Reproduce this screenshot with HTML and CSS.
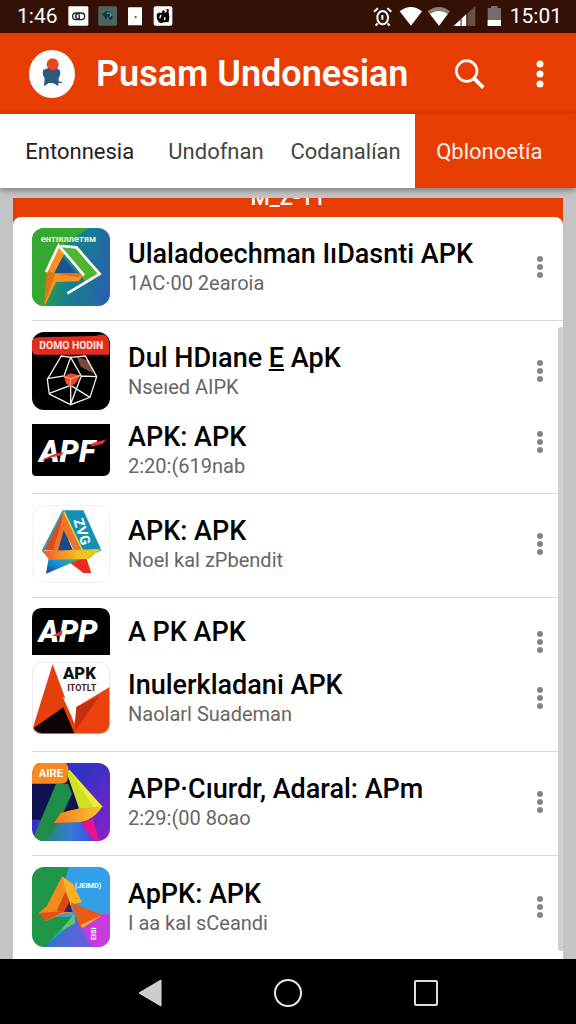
FILE: index.html
```html
<!DOCTYPE html>
<html lang="id">
<head>
<meta charset="UTF-8">
<meta name="viewport" content="width=device-width, initial-scale=1">
<title>Pusam Undonesian</title>
<link rel="stylesheet" href="styles.css">
</head>
<body>

<!-- status bar -->
<div class="status">
  <span class="clock">1:46</span>
  <svg class="s-icons" width="105" height="20" viewBox="0 0 315 60">
    <rect x="1" y="1" width="60" height="58" rx="4" fill="#fff"/>
    <rect x="14" y="21" width="36" height="20" rx="10" fill="none" stroke="#222" stroke-width="4"/>
    <path d="M24 25v12M33 23a8 8 0 1 0 1 15z" fill="none" stroke="#222" stroke-width="4"/>
    <rect x="91" y="1" width="56" height="58" rx="4" fill="#4d665c"/>
    <path d="M103 25q14-18 28-4l3 16-8 6-7-14-4 12z" fill="#17343c"/>
    <path d="M116 22q10-4 14 4l-5 6" fill="none" stroke="#3bb0ac" stroke-width="4"/>
    <rect x="180" y="4" width="42" height="54" rx="2" fill="#fff"/>
    <circle cx="203" cy="33" r="3" fill="#444"/>
    <rect x="257" y="1" width="56" height="58" rx="6" fill="#fff"/>
    <path d="M266 25q6-9 14-4l6-9 5 4-3 5 8-3V9h6v13q5 12 0 26l-14 1-9 3q-14-4-13-27z" fill="#080808"/>
    <path d="M279 27l-4 10M290 34v8" stroke="#fff" stroke-width="4"/>
  </svg>
  <svg class="s-right" width="129" height="22" viewBox="0 0 387 66">
    <g fill="none" stroke="#fff" stroke-width="6">
      <ellipse cx="29" cy="38" rx="16" ry="20"/>
      <path d="M3 20l12-10M43 10l12 10M14 55l-6 7M44 55l6 7M28 30v14"/>
    </g>
    <path d="M80 19q34-26 67 0l-33 43z" fill="#fff"/>
    <path d="M164 19q34-26 67 0l-33 43z" fill="#8b8078"/>
    <path d="M171 27q27-18 53 0l-26 35z" fill="#fff"/>
    <path d="M242 63l65-60v60z" fill="#6b5049"/>
    <path d="M242 63l38-36v36z" fill="#fff"/>
    <path d="M264 40v23M282 24v39" stroke="#351006" stroke-width="3"/>
    <path d="M344 9h10V3h20v6h10v54h-40z" fill="#766b68"/>
    <path d="M344 45h40v18h-40z" fill="#fff"/>
  </svg>
  <span class="clock">15:01</span>
</div>

<!-- app bar -->
<header class="appbar">
  <svg class="logo" width="46" height="48" viewBox="0 0 138 144">
    <ellipse cx="69" cy="72" rx="69" ry="72" fill="#fff"/>
    <path d="M43 60q10-8 26-2 14-6 23 2 5 13-3 24v10l10 2-1 4-9-2-2 10-13-8-15-1-14 10 2-25q-9-10-4-24z" fill="#2b5a7c"/>
    <circle cx="71" cy="43" r="18" fill="#e54a22"/>
    <path d="M57 54q14 12 28 0" fill="none" stroke="#a5474a" stroke-width="4"/>
  </svg>
  <h1>Pusam Undonesian</h1>
  <button class="ibtn" aria-label="Search">
    <svg width="30" height="30" viewBox="0 0 90 90" fill="none" stroke="#fff">
      <circle cx="35" cy="36" r="31" stroke-width="8"/>
      <path d="M57 58l28 28" stroke-width="11"/>
    </svg>
  </button>
  <button class="ibtn more" aria-label="Menu">
    <svg width="8" height="28" viewBox="0 0 8 28" fill="#fff"><circle cx="4" cy="4" r="3.5"/><circle cx="4" cy="14" r="3.5"/><circle cx="4" cy="24" r="3.5"/></svg>
  </button>
</header>

<!-- tabs -->
<nav class="tabs">
  <a href="#" class="first">Entonnesia</a>
  <a href="#">Undofnan</a>
  <a href="#" class="third">Codanalían</a>
  <a href="#" class="active">Qblonoetía</a>
</nav>

<main>
  <div class="banner"><span>M_Z-11</span></div>
  <div class="card">

    <section class="group">
      <div class="row">
        <svg class="icon" width="78" height="78" viewBox="0 0 234 234">
          <defs>
            <linearGradient id="g1" x1="0" y1=".4" x2="1" y2=".6"><stop offset=".15" stop-color="#35a832"/><stop offset=".5" stop-color="#16828a"/><stop offset="1" stop-color="#2862ae"/></linearGradient>
            <clipPath id="round"><rect width="234" height="234" rx="36"/></clipPath>
          </defs>
          <g clip-path="url(#round)">
            <rect width="234" height="234" fill="url(#g1)"/>
            <path d="M0 0h170L90 55 40 234H0z" fill="#35a832"/>
            <path d="M90 53l50 5 62 80-42 25z" fill="#4fb52f"/>
            <path d="M88 80l44 55H68z" fill="#1a5593"/>
            <path d="M80 52l20 20-34 64h92l-18 24-68 2-34 72 6-100z" fill="#f7931e"/>
            <path d="M44 128l26 8-34 96z" fill="#d97713"/>
            <path d="M66 136h92l-20 12z" fill="#e56b16"/>
            <path d="M42 132l38-80 76 90M88 54l45 4 70 80-97 58" fill="none" stroke="#fff" stroke-width="8"/>
            <text x="26" y="41" class="t1">ентıяллетям</text>
          </g>
        </svg>
        <div class="info"><h2>Ulaladoechman IıDasnti APK</h2><p>1AC·00 2earoia</p></div>
        <button class="dots" aria-label="Options"><i></i><i></i><i></i></button>
      </div>
    </section>

    <section class="group double">
      <div class="row">
        <svg class="icon" width="78" height="78" viewBox="0 0 234 234">
          <rect width="234" height="234" rx="36" fill="#000"/>
          <path d="M0 30Q0 20 18 16L190 12q30-12 38 8 6 14 4 48H10Q-4 66 0 30z" fill="#e22c1d"/>
          <text x="22" y="51" class="t2">DOMO HODIN</text>
          <path d="M134 74l38 12 12 38-38-20z" fill="#7b4a3a"/>
          <g fill="none" stroke="#f4f0ee" stroke-width="4">
            <path d="M88 72l28 4 44-4 34 62-20 62-58 22-64-32-6-44z"/>
            <path d="M46 140l50-8 20-56 32 56 46 2M116 158v58l32-84M52 184l64-24 58 36"/>
          </g>
          <path d="M96 134l18-10 32 6-14 22-18 14-12-12z" fill="#f04a26"/>
          <path d="M96 134l20 6 30-10M116 140l-2 26" fill="none" stroke="#ffb49b" stroke-width="3"/>
        </svg>
        <div class="info"><h2>Dul HDıane <u>E</u> ApK</h2><p>Nseıed AIPK</p></div>
        <button class="dots" aria-label="Options"><i></i><i></i><i></i></button>
      </div>
      <div class="row">
        <svg class="icon" width="78" height="52" viewBox="0 0 234 156">
          <path d="M0 0h234v136q0 20-20 20H12Q0 156 0 144z" fill="#000"/>
          <text x="22" y="113" class="t3">APF</text>
          <path d="M24 112q34-22 70-28l-4 10q-34 4-66 18zM180 58l42-12-10 14-36 8z" fill="#e2312e"/>
        </svg>
        <div class="info"><h2>APK: APK</h2><p>2:20:(619nab</p></div>
        <button class="dots up" aria-label="Options"><i></i><i></i><i></i></button>
      </div>
    </section>

    <section class="group">
      <div class="row">
        <svg class="icon" width="78" height="78" viewBox="0 0 234 234">
          <defs>
            <linearGradient id="g4" x1="0" y1="1" x2="1" y2="0"><stop offset="0" stop-color="#20408e"/><stop offset=".5" stop-color="#1495d8"/><stop offset="1" stop-color="#48b54a"/></linearGradient>
            <linearGradient id="g5"><stop offset="0" stop-color="#f1582b"/><stop offset=".6" stop-color="#f8bd21"/><stop offset="1" stop-color="#d4d22b"/></linearGradient>
          </defs>
          <rect x="1" y="1" width="232" height="232" rx="36" fill="#fff" stroke="#e8e8e8" stroke-width="2"/>
          <path d="M92 16l62 0 54 120-60 28z" fill="#1190b8"/>
          <path d="M94 16L30 136l70 2 18-62z" fill="#d84c27"/>
          <path d="M96 76l28 62H78z" fill="#164a91"/>
          <path d="M94 16l54 120-20 4-34-66-16 62-16 4 26-88z" fill="#ee742c"/>
          <path d="M94 16l58 122" stroke="#e8cf2e" stroke-width="5"/>
          <path d="M94 16L32 138" stroke="#27a5b5" stroke-width="5"/>
          <path d="M124 148l40 14 14 42-24 0-44-34z" fill="#e92c1d"/>
          <path d="M50 158l96 4-104 44z" fill="url(#g4)"/>
          <path d="M30 138l176-6-34 30-120 2z" fill="url(#g5)"/>
          <text x="124" y="46" class="t4" transform="rotate(72 124 46)">ZVG</text>
        </svg>
        <div class="info"><h2>APK: APK</h2><p>Noel kal zPbendit</p></div>
        <button class="dots" aria-label="Options"><i></i><i></i><i></i></button>
      </div>
    </section>

    <section class="group double tight">
      <div class="row">
        <svg class="icon" width="78" height="47" viewBox="0 0 234 141">
          <path d="M0 141V32Q0 0 32 0h170q32 0 32 32v109z" fill="#000"/>
          <text x="20" y="103" class="t3">APP</text>
          <path d="M60 84l32-18-4 18z" fill="#e2312e"/>
        </svg>
        <div class="info"><h2>A PK APK</h2></div>
        <button class="dots down" aria-label="Options"><i></i><i></i><i></i></button>
      </div>
      <div class="row">
        <svg class="icon" width="78" height="72" viewBox="0 0 234 216">
          <defs><clipPath id="r6"><rect width="234" height="216" rx="30"/></clipPath></defs>
          <g clip-path="url(#r6)">
            <path d="M0 0h234v216H0z" fill="#fff"/>
            <path d="M0 206L62 6l66 180v30H0z" fill="#e63e0c"/>
            <path d="M234 74v142H124l8-80z" fill="#ec430e"/>
            <path d="M132 136l70-34-74 108z" fill="#c82e0d"/>
            <path d="M0 202l94-66 34 80H0z" fill="#0b0403"/>
            <path d="M92 104l36 80 5-50z" fill="#fff"/>
            <text x="93" y="52" class="t6">APK</text>
            <text x="106" y="88" class="t7">ITOTLT</text>
          </g>
          <rect x="1" y="1" width="232" height="214" rx="30" fill="none" stroke="#ddd" stroke-width="2"/>
        </svg>
        <div class="info"><h2>Inulerkladani APK</h2><p>Naolarl Suademan</p></div>
        <button class="dots" aria-label="Options"><i></i><i></i><i></i></button>
      </div>
    </section>

    <section class="group">
      <div class="row">
        <svg class="icon" width="78" height="78" viewBox="0 0 234 234">
          <defs>
            <linearGradient id="g7" x1="0" y1="0" x2="1" y2="1"><stop offset=".4" stop-color="#3431c5"/><stop offset="1" stop-color="#8b22c8"/></linearGradient>
            <linearGradient id="g8"><stop offset="0" stop-color="#f47b20"/><stop offset="1" stop-color="#fdc32b"/></linearGradient>
            <linearGradient id="g9"><stop offset="0" stop-color="#228b57"/><stop offset=".6" stop-color="#3479d8"/><stop offset="1" stop-color="#454bdc"/></linearGradient>
          </defs>
          <g clip-path="url(#round)">
            <rect width="234" height="234" fill="url(#g7)"/>
            <path d="M0 40h110l30 98-70 32H0z" fill="#10124f"/>
            <path d="M20 234l50-56 80-2 34 58z" fill="url(#g9)"/>
            <path d="M100 18l14 4 98 110-70 6z" fill="#cfe025"/>
            <path d="M112 22l100 110-26 2z" fill="#e9ee3a"/>
            <path d="M72 62h36l12 30-40 88-40 54H0z" fill="#1f8d4a"/>
            <path d="M86 150q60-20 124-18-32 46-74 46l-70 2z" fill="url(#g8)"/>
            <path d="M146 180l38-12 18 66h-16z" fill="#e41298"/>
          </g>
          <path d="M2 20Q8-4 34-2h58q18 2 17 22l-2 28q-2 14-18 14H-3z" fill="#f58a1e"/>
          <text x="20" y="43" class="t8">AIRE</text>
        </svg>
        <div class="info"><h2>APP·Cıurdr, Adaral: APm</h2><p>2:29:(00 8oao</p></div>
        <button class="dots" aria-label="Options"><i></i><i></i><i></i></button>
      </div>
    </section>

    <section class="group">
      <div class="row">
        <svg class="icon" width="78" height="80" viewBox="0 0 234 240">
          <defs>
            <clipPath id="r8"><rect width="234" height="240" rx="36"/></clipPath>
            <linearGradient id="g10"><stop offset="0" stop-color="#2e78cc"/><stop offset="1" stop-color="#7658df"/></linearGradient>
          </defs>
          <g clip-path="url(#r8)">
            <path d="M0 0h234v240H0z" fill="#1f9548"/>
            <path d="M110 0h124v150H70z" fill="#329fe8"/>
            <path d="M40 240l90-90 60 90z" fill="url(#g10)"/>
            <path d="M200 142l34 0v98h-54l-34-64z" fill="#c83cdf"/>
            <path d="M90 28L44 118l-24 20 22 24 56-24 24 2z" fill="#f48a1d"/>
            <path d="M20 138l78-6-56 30z" fill="#e5501c"/>
            <path d="M90 28l32 22 28 56-36 8z" fill="#fbb023"/>
            <path d="M100 74l-26 58 26 4 14-30z" fill="#d94817"/>
            <path d="M112 106l10 30-26-2z" fill="#4a1b5c"/>
            <path d="M116 106l96 38-66 38z" fill="#ea5a1b"/>
            <path d="M212 144l-60 38-6-8z" fill="#fbb531"/>
            <path d="M130 140l-84 90 66-52z" fill="#1fae9a"/>
            <path d="M126 140l-40 52 44-24z" fill="#65c36b"/>
            <text x="128" y="64" class="t9">(ЈЕIMD)</text>
            <text x="192" y="220" class="t9" transform="rotate(-90 192 220)">EISI</text>
          </g>
        </svg>
        <div class="info"><h2>ApPK: APK</h2><p>I aa kal sCeandi</p></div>
        <button class="dots" aria-label="Options"><i></i><i></i><i></i></button>
      </div>
    </section>

    <div class="scrollbar"></div>
  </div>
</main>

<!-- system buttons -->
<footer class="sysnav">
  <button aria-label="Back"><svg width="24" height="28" viewBox="0 0 24 28"><path d="M1 14L23 1v26z" fill="#ccc" stroke="#ddd" stroke-linejoin="round"/></svg></button>
  <button aria-label="Home"><svg width="30" height="30" viewBox="0 0 30 30"><circle cx="15" cy="15" r="13" fill="none" stroke="#e8e8e8" stroke-width="2"/></svg></button>
  <button aria-label="Recent"><svg width="24" height="26" viewBox="0 0 24 26"><rect x="1" y="1" width="22" height="24" rx="1" fill="none" stroke="#ddd" stroke-width="2"/></svg></button>
</footer>

</body>
</html>
```

FILE: styles.css
```css
:root{--or:#e73c02;--grey:#c3c4c5}
*{box-sizing:border-box}
body{
  margin:0;min-height:100vh;
  display:flex;flex-direction:column;
  font-family:Roboto,"Liberation Sans",sans-serif;
  background:var(--grey);color:#000}
h1,h2,p{margin:0;white-space:nowrap}
button{background:none;border:none;padding:0;cursor:pointer}
svg{display:block;flex:none}

/* status bar */
.status{
  height:33px;padding:0 14px 2px 17px;
  display:flex;align-items:center;
  background:#351006;color:#fff}
.clock{font-size:21px;line-height:30px}
.s-icons{margin-left:10px}
.s-right{margin-left:auto;margin-right:8px}

/* app bar */
.appbar{
  height:81px;padding:0 22px 0 29px;
  display:flex;align-items:center;
  background:var(--or);color:#fff}
.appbar h1{flex:1;margin-left:21px;font-size:36px;line-height:48px;font-weight:600}
.more{width:28px;margin-left:41px;display:flex;justify-content:center}

/* tabs */
.tabs{
  height:74px;display:flex;position:relative;
  background:#fff;box-shadow:0 2px 6px rgba(0,0,0,.4)}
.tabs a{
  width:21%;display:flex;align-items:center;justify-content:center;
  font-size:22px;color:#444;text-decoration:none}
.tabs .first{width:27%;padding-left:4px;color:#222}
.tabs .third{width:24%}
.tabs .active{width:28%;padding-right:12px;background:var(--or);color:#fff0e6}

/* list */
main{flex:1;display:flex;flex-direction:column;padding:10px 13px 0}
.banner{
  height:26px;margin-bottom:-7px;overflow:hidden;
  background:var(--or);color:#fff;text-align:center}
.banner span{display:block;margin-top:-16px;font-size:22px;line-height:32px;font-weight:500}
.card{
  position:relative;flex:1;padding-left:19px;
  background:#fff;border-radius:8px 8px 0 0}
.group{
  display:flex;flex-direction:column;gap:11px;
  padding:11px 0 14px;border-bottom:1px solid #d8d8d8}
.tight{gap:7px;padding:10px 0 17px}
.group:nth-last-child(2){padding-bottom:8px;border:none}
.row{display:flex;align-items:center}
.info{flex:1;margin-left:18px}
.info h2{font-size:27px;line-height:32px;font-weight:500}
.info p{font-size:20px;line-height:26px;color:#666}
.dots{
  width:24px;margin-right:11px;
  display:flex;flex-direction:column;align-items:center;gap:2px}
.dots i{width:6px;height:6px;border-radius:50%;background:#858585}
.up{padding-bottom:16px}
.down{padding-top:20px}
.scrollbar{
  position:absolute;top:110px;right:0;bottom:8px;width:5px;
  border-radius:3px 0 0 3px;background:#cfcfcf}

/* lettering on the app icons */
.icon text{font-family:Roboto,sans-serif;font-weight:700;fill:#fff}
.icon .t1{font-size:28px;fill:#e6f5dc}
.icon .t2{font-size:31px;fill:#ffe6df}
.icon .t3{font-size:92px;font-weight:900;font-style:italic}
.icon .t4{font-size:42px}
.icon .t6{font-size:50px;font-weight:900;fill:#111}
.icon .t7{font-size:27px;fill:#4b2020}
.icon .t8{font-size:34px}
.icon .t9{font-size:22px}

/* system buttons */
.sysnav{
  height:65px;padding:2px 24% 0;
  display:flex;align-items:center;justify-content:space-between;
  background:#000}
```
